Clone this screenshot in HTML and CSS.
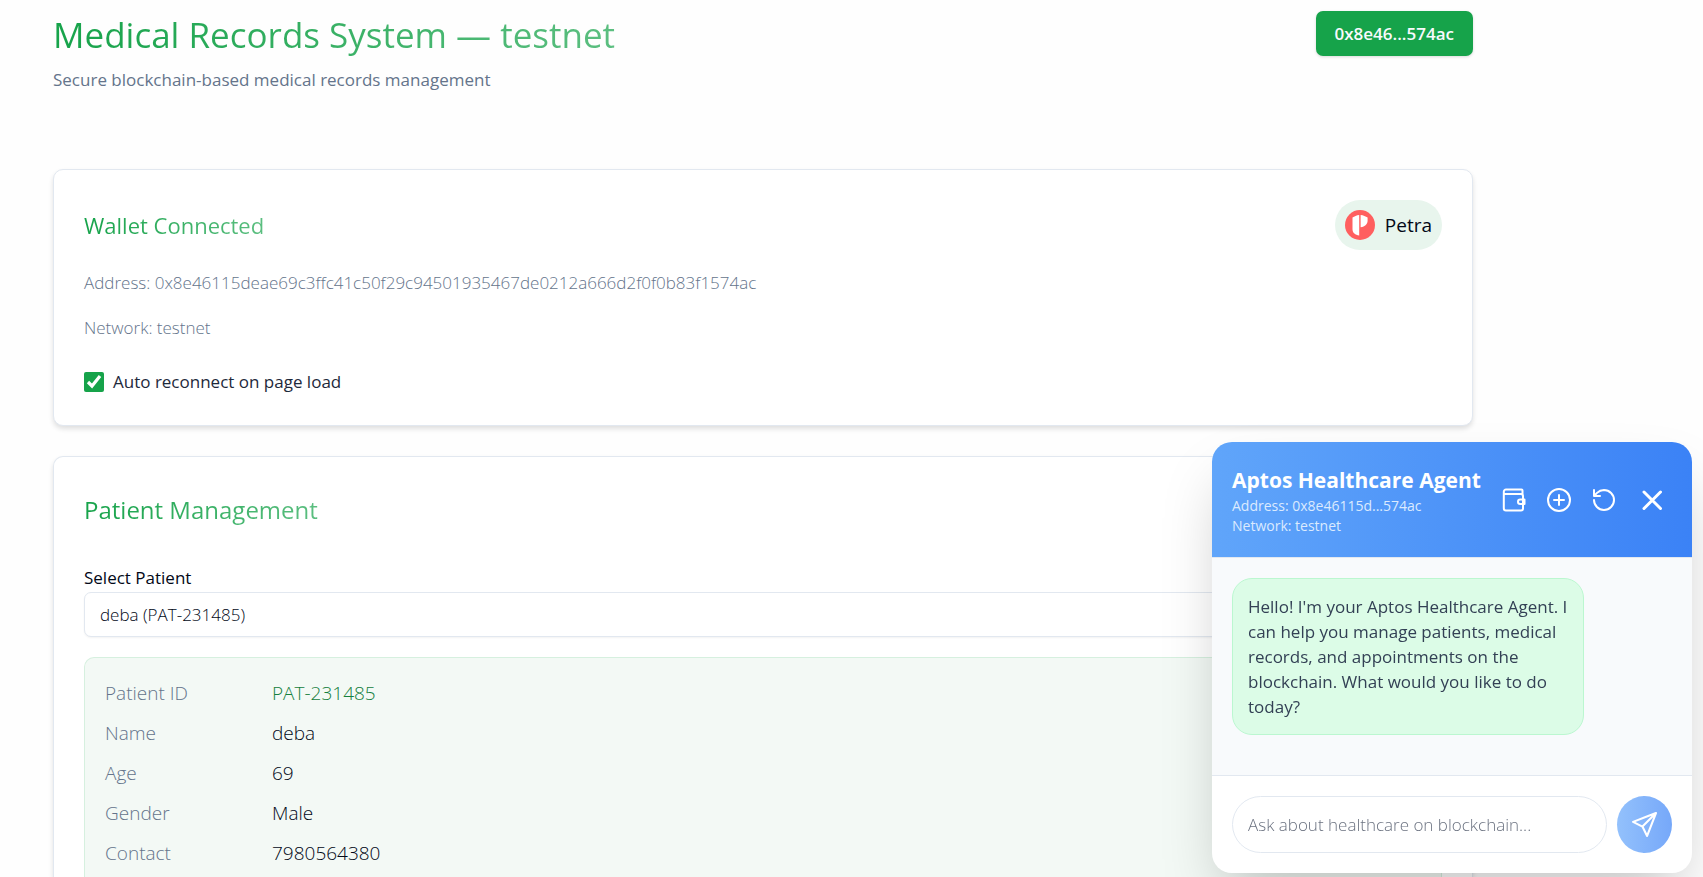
FILE: index.html
```html
<!DOCTYPE html>
<html lang="en">
<head>
    <meta charset="UTF-8">
    <meta name="viewport" content="width=device-width, initial-scale=1.0">
    <title>Medical Records System</title>
    <link rel="stylesheet" href="styles.css">
</head>
<body>
    <main class="page">
        <header class="page-header">
            <div>
                <h1 class="gradient-text">Medical Records System — testnet</h1>
                <p class="subtitle">Secure blockchain-based medical records management</p>
            </div>
            <button class="account-button">0x8e46...574ac</button>
        </header>

        <section class="card wallet">
            <div class="wallet-header">
                <h2 class="gradient-text">Wallet Connected</h2>
                <div class="wallet-badge">
                    <svg width="30" height="30" viewBox="0 0 30 30" aria-hidden="true">
                        <circle cx="15" cy="15" r="15" fill="#ff5f5f"/>
                        <path d="M14.200 5v20.500c-4-.5-6.700-2.500-6.700-6.500V7.500C9.500 6.300 11.500 5.300 14.200 5z" fill="#fff"/>
                        <path d="M15.600 5c2.700.3 5 1.300 7 2.500v3c0 3.500-2.500 6.300-7 6.800z" fill="#fff"/>
                    </svg>
                    <span>Petra</span>
                </div>
            </div>
            <p class="wallet-line">Address: 0x8e46115deae69c3ffc41c50f29c94501935467de0212a666d2f0f0b83f1574ac</p>
            <p class="wallet-line">Network: testnet</p>
            <label class="reconnect" for="reconnect">
                <input type="checkbox" id="reconnect" checked>
                <span>Auto reconnect on page load</span>
            </label>
        </section>

        <section class="card patients">
            <h2 class="gradient-text">Patient Management</h2>
            <label class="field-label" for="patient">Select Patient</label>
            <select id="patient">
                <option>deba (PAT-231485)</option>
            </select>
            <dl class="details">
                <dt>Patient ID</dt>
                <dd class="patient-id">PAT-231485</dd>
                <dt>Name</dt>
                <dd>deba</dd>
                <dt>Age</dt>
                <dd>69</dd>
                <dt>Gender</dt>
                <dd>Male</dd>
                <dt>Contact</dt>
                <dd>7980564380</dd>
            </dl>
        </section>
    </main>

    <aside class="chat">
        <header class="chat-header">
            <div>
                <h3>Aptos Healthcare Agent</h3>
                <p>Address: 0x8e46115d...574ac</p>
                <p>Network: testnet</p>
            </div>
            <div class="chat-actions">
                <button aria-label="Wallet">
                    <svg viewBox="0 0 24 24"><path d="M20.500 7V2.500a1 1 0 0 0-1-1H4A2.200 2.200 0 0 0 1.800 3.700v16.600A2.200 2.200 0 0 0 4 22.500h15a2 2 0 0 0 2-2V8a2 2 0 0 0-2-2H2.500M22.500 11.500h-4.300a2.200 2.200 0 0 0 0 4.400h4.300z"/></svg>
                </button>
                <button aria-label="New chat">
                    <svg viewBox="0 0 24 24"><circle cx="12" cy="12" r="11"/><path d="M7 12h10M12 7v10"/></svg>
                </button>
                <button aria-label="Reset chat">
                    <svg viewBox="0 0 24 24"><path d="M2 12a10 10 0 1 0 10-10 10.500 10.500 0 0 0-7 2.900L2 8M2 2v6h6"/></svg>
                </button>
                <button class="close" aria-label="Close">
                    <svg viewBox="0 0 24 24"><path d="M4 4l16.500 16.500M20.500 4L4 20.500"/></svg>
                </button>
            </div>
        </header>
        <div class="chat-messages">
            <p class="message">Hello! I'm your Aptos Healthcare Agent. I can help you manage patients, medical records, and appointments on the blockchain. What would you like to do today?</p>
        </div>
        <form class="chat-form">
            <input type="text" aria-label="Message" placeholder="Ask about healthcare on blockchain...">
            <button type="button" aria-label="Send">
                <svg viewBox="0 0 24 24"><path d="M23 1L1 9.500l9 4.500 4.500 9zM23 1L10 14"/></svg>
            </button>
        </form>
    </aside>
</body>
</html>
```

FILE: styles.css
```css
* {
    margin: 0;
    padding: 0;
    box-sizing: border-box;
    font-family: "Open Sans", "Noto Sans", sans-serif;
}

body {
    height: 100vh;
    overflow: hidden;
    background: #fefefe;
    color: #020817;
    font-size: 17px;
    font-weight: 300;
}

button {
    border: none;
    cursor: pointer;
}

svg {
    display: block;
}

.page {
    display: flex;
    flex-direction: column;
    height: 100%;
    margin-left: 53px;
    margin-right: 230px;
}

.page-header {
    display: flex;
    justify-content: space-between;
    align-items: flex-start;
    padding-top: 11px;
    height: 169px;
    flex-shrink: 0;
}

.gradient-text {
    width: fit-content;
    background: linear-gradient(to right, #16a34a, rgba(22, 163, 74, 0.7));
    -webkit-background-clip: text;
    background-clip: text;
    color: transparent;
    font-weight: 500;
}

h1 {
    font-size: 35px;
    line-height: 48px;
}

h2 {
    font-size: 22px;
    line-height: 30px;
}

.subtitle {
    margin-top: 9px;
    color: #64748b;
    font-size: 17px;
    line-height: 24px;
    font-weight: 500;
}

.account-button {
    height: 45px;
    padding: 0 19px;
    border-radius: 7px;
    background: #16a34a;
    color: #f8fafc;
    font-size: 17px;
    font-weight: 600;
    box-shadow: 0 1px 3px rgba(0, 0, 0, 0.15);
}

.card {
    padding: 30px;
    border: 1px solid #e2e8f0;
    border-radius: 10px;
    background: #fff;
    box-shadow: 0 3px 5px rgba(0, 0, 0, 0.12);
}

.wallet {
    flex-shrink: 0;
    height: 257px;
    margin-bottom: 30px;
}

.wallet-header {
    display: flex;
    justify-content: space-between;
    align-items: center;
    margin-bottom: 20px;
}

.wallet-badge {
    display: flex;
    align-items: center;
    gap: 10px;
    height: 50px;
    padding: 0 10px;
    border-radius: 25px;
    background: #e8f5ed;
    font-size: 19px;
    font-weight: 500;
}

.wallet-line {
    margin-bottom: 20px;
    color: #64748b;
    line-height: 25px;
}

.reconnect {
    display: flex;
    align-items: center;
    gap: 9px;
    margin-top: 30px;
    color: #1e293b;
    font-weight: 400;
}

.reconnect input {
    width: 20px;
    height: 20px;
    accent-color: #16a34a;
}

.patients {
    display: flex;
    flex: 1;
    flex-direction: column;
    min-height: 0;
    border-bottom: none;
    border-radius: 10px 10px 0 0;
    padding-bottom: 0;
}

.patients h2 {
    margin-top: 8px;
    margin-bottom: 40px;
    font-size: 24px;
}

.field-label {
    margin-bottom: 2px;
    line-height: 25px;
    font-weight: 500;
}

select {
    flex-shrink: 0;
    width: 100%;
    height: 45px;
    padding: 0 15px;
    border: 1px solid #e2e8f0;
    border-radius: 7px;
    background: #fff;
    color: #020817;
    font-size: 17px;
    font-weight: 300;
    appearance: none;
    box-shadow: 0 1px 2px rgba(0, 0, 0, 0.05);
}

.details {
    display: grid;
    flex: 1;
    grid-template-columns: 167px 1fr;
    grid-auto-rows: 30px;
    row-gap: 10px;
    margin-top: 20px;
    padding: 20px;
    border: 1px solid #d6f0df;
    border-bottom: none;
    border-radius: 10px 10px 0 0;
    background: #f3f9f5;
    font-size: 19px;
    line-height: 30px;
}

.details dt {
    color: #64748b;
}

.details .patient-id {
    color: #15803d;
}

.chat {
    position: fixed;
    right: 11px;
    bottom: 4px;
    width: 480px;
    border-radius: 20px;
    overflow: hidden;
    background: #fff;
    box-shadow: 0 31px 62px -15px rgba(0, 0, 0, 0.25);
}

.chat-header {
    display: flex;
    justify-content: space-between;
    align-items: center;
    height: 115px;
    padding: 0 28px 0 20px;
    background: linear-gradient(to right, #60a5fa, #3b82f6);
    color: #fff;
}

.chat-header h3 {
    font-size: 21px;
    font-weight: 700;
    line-height: 32px;
}

.chat-header p {
    color: #dbeafe;
    font-size: 14px;
    line-height: 20px;
    font-weight: 400;
}

.chat-actions {
    display: flex;
    gap: 21px;
}

.chat-actions button {
    background: none;
}

.chat-actions .close {
    margin-left: 3px;
}

.chat-actions svg {
    width: 24px;
    height: 24px;
    fill: none;
    stroke: #fff;
    stroke-width: 2;
    stroke-linecap: round;
    stroke-linejoin: round;
}

.chat-actions .close svg {
    stroke-width: 3;
}

.chat-messages {
    height: 218px;
    padding: 20px;
    border-top: 1px solid #e2e8f0;
    background: #f8fafc;
}

.message {
    width: 352px;
    padding: 15px 10px 15px 15px;
    border: 1px solid #bbf7d0;
    border-radius: 20px;
    background: #dcfce7;
    color: #334155;
    font-weight: 400;
    line-height: 25px;
}

.chat-form {
    display: flex;
    gap: 10px;
    padding: 20px;
    border-top: 1px solid #e2e8f0;
}

.chat-form input {
    flex: 1;
    min-width: 0;
    height: 57px;
    padding: 0 15px;
    border: 1px solid #e2e8f0;
    border-radius: 29px;
    font-size: 17px;
    font-weight: 300;
}

.chat-form input::placeholder {
    color: #6b7280;
}

.chat-form button {
    display: flex;
    justify-content: center;
    align-items: center;
    width: 55px;
    border-radius: 50%;
    background: linear-gradient(to right, #93c1fc, #76a8f9);
}

.chat-form svg {
    width: 25px;
    height: 25px;
    fill: none;
    stroke: #fff;
    stroke-width: 2;
    stroke-linejoin: round;
}
```
